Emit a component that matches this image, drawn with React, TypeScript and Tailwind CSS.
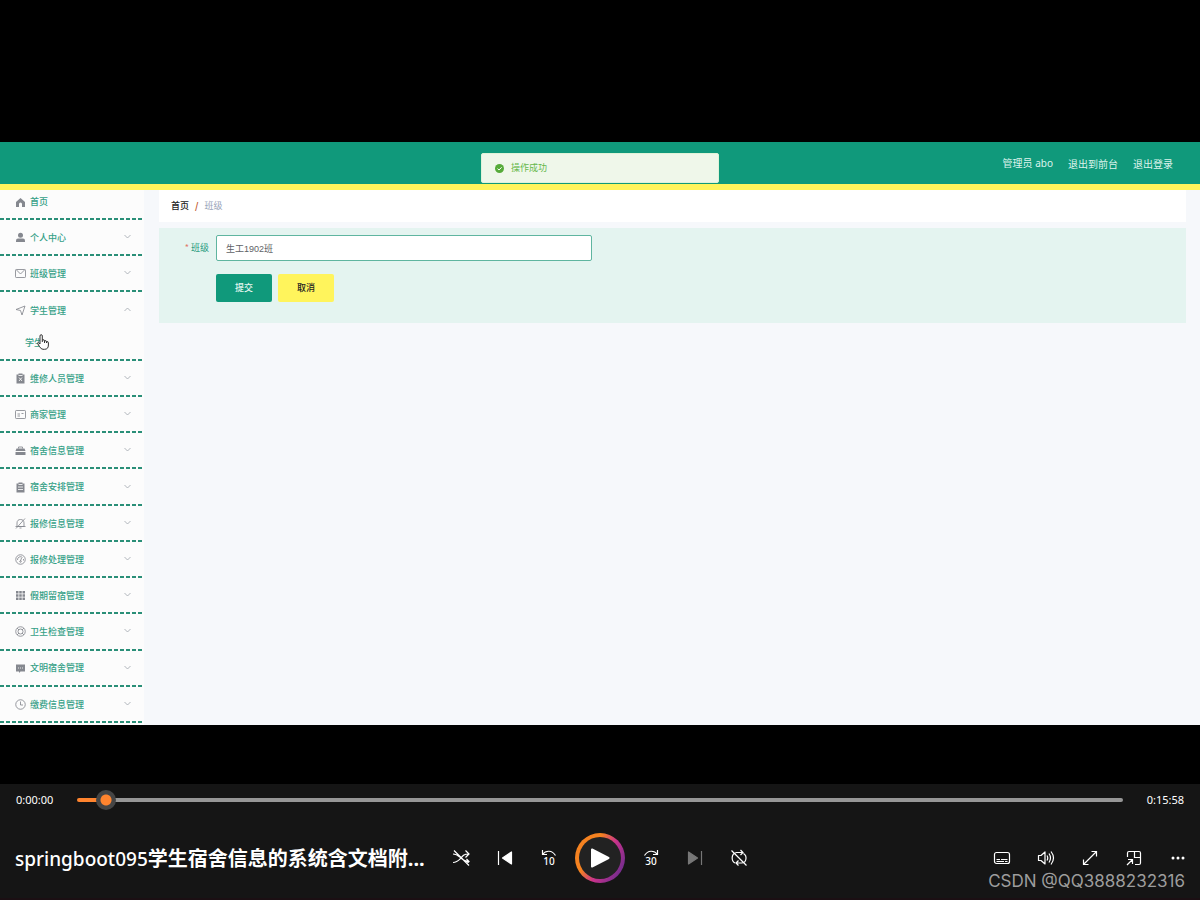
import React, { useState } from "react";

type IconProps = { name: string };

const MENU = [
    { label: "个人中心", icon: "user" },
    { label: "班级管理", icon: "mail" },
    { label: "学生管理", icon: "position", child: "学生" },
    { label: "维修人员管理", icon: "failed" },
    { label: "商家管理", icon: "postcard" },
    { label: "宿舍信息管理", icon: "briefcase" },
    { label: "宿舍安排管理", icon: "order" },
    { label: "报修信息管理", icon: "bell" },
    { label: "报修处理管理", icon: "gauge" },
    { label: "假期留宿管理", icon: "grid" },
    { label: "卫生检查管理", icon: "help" },
    { label: "文明宿舍管理", icon: "chat" },
    { label: "缴费信息管理", icon: "clock" },
];

const MenuIcon = ({ name }: IconProps) => {
    const shapes: Record<string, React.ReactNode> = {
        home: <path fill="currentColor" stroke="none" d="M11 2 L20 10 V20 H14 V14 A3 3 0 0 0 8 14 V20 H2 V10 Z" />,
        user: (
            <g fill="currentColor" stroke="none">
                <circle cx="11" cy="6.5" r="5" />
                <path d="M2 20 V17 A4 4 0 0 1 6 13 H16 A4 4 0 0 1 20 17 V20 Z" />
            </g>
        ),
        mail: (
            <>
                <rect x="1" y="3" width="20" height="16" rx="1.5" />
                <path d="M3 4 L11 12 L19 4" />
            </>
        ),
        position: <path d="M2 9 L20 2 L14 20 L11 11 Z" />,
        failed: (
            <>
                <path fill="currentColor" stroke="none" d="M3 3 H7 V1 H15 V3 H19 V21 H3 Z" />
                <path stroke="#fcfcfc" d="M7 5 H15 M8 9 L14 16 M14 9 L8 16" />
            </>
        ),
        postcard: (
            <>
                <rect x="1" y="3" width="20" height="16" rx="1.5" />
                <path d="M5 10 H10 M5 14 H10 M13 9 H17" />
            </>
        ),
        briefcase: (
            <>
                <path d="M7 7 V4 H15 V7" />
                <path fill="currentColor" stroke="none" d="M1 12 L3 7 H19 L21 12 Z M1 14 H21 V20 H1 Z" />
            </>
        ),
        order: (
            <>
                <path fill="currentColor" stroke="none" d="M3 3 H7 V1 H15 V3 H19 V21 H3 Z" />
                <path stroke="#fcfcfc" d="M7 5 H15 M6 10 H16 M6 15 H16" />
            </>
        ),
        bell: (
            <>
                <path d="M4 17 V10 C4 5 7 3 11 3 C15 3 18 5 18 10 V17 Z M9 20 H13 M1 17 H21" />
                <path d="M20 1 L2 21" />
            </>
        ),
        gauge: (
            <>
                <circle cx="11" cy="11" r="9.5" />
                <path d="M5 12 A6 6 0 0 1 15 7 M17 10 V13 M13 8 L11 14" />
                <circle cx="11" cy="15" r="1.5" />
            </>
        ),
        grid: (
            <path
                fill="currentColor"
                stroke="none"
                d="M2 2h5v5H2z M8.500 2h5v5h-5z M15 2h5v5h-5z M2 8.500h5v5H2z M8.500 8.500h5v5h-5z M15 8.500h5v5h-5z M2 15h5v5H2z M8.500 15h5v5h-5z M15 15h5v5h-5z"
            />
        ),
        help: (
            <>
                <circle cx="11" cy="11" r="9.5" />
                <circle cx="11" cy="11" r="5" />
                <path d="M4 4 L8 8 M18 4 L14 8 M4 18 L8 14 M18 18 L14 14" />
            </>
        ),
        chat: (
            <>
                <path fill="currentColor" stroke="none" d="M2 3 H20 V17 H11 L8 20 V17 H2 Z" />
                <path stroke="#fcfcfc" d="M6 10 H8 M10 10 H12 M14 10 H16" />
            </>
        ),
        clock: (
            <>
                <circle cx="11" cy="11" r="9.5" />
                <path d="M11 5 V12 H16" />
            </>
        ),
    };
    return (
        <svg viewBox="0 0 22 22" className="size-[11px] shrink-0 text-[#85888f]" fill="none" stroke="currentColor" strokeWidth="1.700">
            {shapes[name]}
        </svg>
    );
};

const DashedLine = () => (
    <div className="h-[2px] shrink-0 bg-[repeating-linear-gradient(90deg,#2a8f78_0px,#2a8f78_4px,transparent_4px,transparent_6px)]" />
);

const Sidebar = () => {
    const [open, setOpen] = useState("学生管理");
    return (
        <nav className="w-36 shrink-0 bg-[#fcfcfc] text-[9px] font-medium text-[#35a087]">
            <a href="#home" className="flex h-7 items-center gap-1 pb-1 pl-[15px]">
                <MenuIcon name="home" />
                首页
            </a>
            <DashedLine />
            <ul className="flex h-[503px] flex-col">
                {MENU.map((item) => (
                    <li key={item.label} className={item.child ? "flex grow basis-8 flex-col" : "flex grow basis-0 flex-col"}>
                        <button
                            onClick={() => setOpen(open === item.label ? "" : item.label)}
                            className="flex grow items-center gap-1 pt-px pr-[13px] pl-[15px] text-left"
                        >
                            <MenuIcon name={item.icon} />
                            <span className="grow">{item.label}</span>
                            <svg viewBox="0 0 7 7" className="mb-[2px] size-[7px] text-[#a0a5ac]" fill="none" stroke="currentColor">
                                <path strokeWidth="0.800" d={open === item.label ? "M0.500 5 L3.500 2 L6.500 5" : "M0.500 2 L3.500 5 L6.500 2"} />
                            </svg>
                        </button>
                        {item.child && (
                            <a href="#student" className="relative flex h-[31px] items-center pl-[25px]">
                                {item.child}
                                {/* Hand pointer */}
                                <svg viewBox="0 0 12 16" className="absolute top-[6px] left-[37px] h-4 w-3" fill="#fff" stroke="#333" strokeLinejoin="round">
                                    <path d="M3 10 V2 Q3 .7 4.200 .7 Q5.300 .7 5.300 2 V6 Q7.500 5 7.500 7 Q9.500 6 9.500 7.700 Q11.400 7 11.400 9 V11 Q11.400 15.300 7.500 15.300 H6 Q4 15.300 2.500 12.500 L.6 9.500 Q.5 7.500 3 10 Z M5.300 6 V8 M7.500 7 V9 M9.500 7.700 V9" />
                                </svg>
                            </a>
                        )}
                        <DashedLine />
                    </li>
                ))}
            </ul>
        </nav>
    );
};

const AdminPage = () => (
    <div className="relative bg-[#f6f8fb] font-['Noto_Sans_CJK_SC',sans-serif]">
        <header className="flex h-12 items-center justify-end gap-[15px] border-b-6 border-[#fff45c] bg-[#10997b] pr-[27px] text-[10px] text-[#dcf3ec]">
            <span className="font-['Noto_Sans','Noto_Sans_CJK_SC',sans-serif]">管理员 abo</span>
            <a href="#front">退出到前台</a>
            <a href="#logout">退出登录</a>
        </header>

        {/* Success message */}
        <div
            role="status"
            className="absolute top-[11px] left-1/2 flex h-[30px] w-[238px] -translate-x-1/2 items-center gap-[7px] rounded-xs border border-[#dff3d8] bg-[#eff7ea] pl-[13px] text-[9px] text-[#67b84a]"
        >
            <svg viewBox="0 0 9 9" className="size-[9px]" fill="none">
                <circle cx="4.500" cy="4.500" r="4.500" fill="#56ab3a" />
                <path d="M2.500 4.600 L4 6 L6.600 3.300" stroke="#fff" />
            </svg>
            操作成功
        </div>

        <div className="flex h-[535px]">
            <Sidebar />
            <main className="grow pr-[14px] pl-[15px] text-[9px]">
                <div className="flex h-8 items-center gap-[6px] bg-white pl-3">
                    <a href="#home" className="font-medium text-[#222]">首页</a>
                    <span className="font-bold text-[#c0562a]">/</span>
                    <span className="text-[#98a3b8]">班级</span>
                </div>
                <form className="mt-[6px] h-[95px] bg-[#e4f4f0] pt-[7px]" onSubmit={(e) => e.preventDefault()}>
                    <div className="flex items-center">
                        <label htmlFor="className" className="w-[57px] pr-[7px] text-right text-[#1f9a7d]">
                            <span className="text-[#e07a6a]">*</span> 班级
                        </label>
                        <input
                            id="className"
                            defaultValue="生工1902班"
                            className="h-[26px] w-[376px] rounded-xs border border-[#5fb5a0] bg-white px-[9px] font-['Liberation_Sans','Noto_Sans_CJK_SC',sans-serif] text-[#606266] outline-none"
                        />
                    </div>
                    <div className="mt-[13px] flex gap-[6px] pl-[57px] font-medium">
                        <button type="submit" className="h-7 w-14 rounded-xs bg-[#10997b] text-[#e4f6f0]">提交</button>
                        <button type="button" className="h-7 w-14 rounded-xs bg-[#fff45c] text-[#222]">取消</button>
                    </div>
                </form>
            </main>
        </div>
    </div>
);

const ControlButton = ({ label, disabled, children }: { label: string; disabled?: boolean; children: React.ReactNode }) => (
    <button aria-label={label} disabled={disabled} className="flex h-11 w-11 items-center justify-center text-white disabled:text-[#777]">
        {children}
    </button>
);

const Glyph = ({ children }: { children: React.ReactNode }) => (
    <svg viewBox="0 0 18 18" className="size-[18px]" fill="none" stroke="currentColor" strokeWidth="1.200">
        {children}
    </svg>
);

const SkipLabel = ({ seconds, d }: { seconds: string; d: string }) => (
    <span className="flex flex-col items-center text-[10px] leading-[9px] font-medium">
        <svg viewBox="0 0 16 7" className="h-[7px] w-4" fill="none" stroke="currentColor" strokeWidth="1.200">
            <path d={d} />
        </svg>
        {seconds}
    </span>
);

const PlayerBar = () => (
    <footer className="relative h-[116px] border-b-2 border-[#1b0f13] bg-[#151515] text-white">
        <div className="flex h-8 items-center px-4 text-[11px]">
            <span className="w-[61px]">0:00:00</span>
            <input
                type="range"
                aria-label="播放进度"
                min={0}
                max={1000}
                defaultValue={19}
                className="h-5 grow appearance-none bg-transparent [&::-webkit-slider-runnable-track]:h-1 [&::-webkit-slider-runnable-track]:rounded-full [&::-webkit-slider-runnable-track]:bg-[linear-gradient(90deg,#ff842e_30px,#969696_30px)] [&::-webkit-slider-thumb]:-mt-2 [&::-webkit-slider-thumb]:size-5 [&::-webkit-slider-thumb]:appearance-none [&::-webkit-slider-thumb]:rounded-full [&::-webkit-slider-thumb]:bg-[radial-gradient(circle,#ff842e_5px,#454545_6px)]"
            />
            <span className="w-[61px] text-right">0:15:58</span>
        </div>
        <div className="grid h-[84px] grid-cols-[1fr_auto_1fr] items-center">
            <h1 className="truncate pt-[2px] pl-[15px] text-[20px] leading-7 font-bold">
                <span className="text-[19px] font-medium">springboot095</span>学生宿舍信息的系统含文档附...
            </h1>
            <div className="flex items-center">
                <ControlButton label="随机播放已关闭">
                    <Glyph>
                        <path d="M1 13.500 C5 13.500 7 11 9 9 C11 6.500 12 5 16.500 5 M13.500 1.500 L17 5 L13.500 8.500 M1 5 C4.500 5 6.500 7 9 9 C11.500 11.500 13 12.500 17 12.500 M14.500 10 L17 12.500 L15 14.500 M2 1.500 L17 16.500" />
                    </Glyph>
                </ControlButton>
                <ControlButton label="上一个">
                    <Glyph>
                        <path d="M2.500 2 V16" />
                        <path fill="currentColor" strokeLinejoin="round" d="M15.500 3 V15 L6.500 9 Z" />
                    </Glyph>
                </ControlButton>
                <ControlButton label="后退 10 秒">
                    <SkipLabel seconds="10" d="M1.500 0 V4.500 H6 M1.500 4.500 C5 0 11 0 14.500 5.500" />
                </ControlButton>
                <button
                    aria-label="播放"
                    className="mx-1 flex size-[50px] items-center justify-center rounded-full bg-[linear-gradient(120deg,#f58220_35%,#c8328c_58%,#7b2d8e_85%)]"
                >
                    <span className="flex size-[42px] items-center justify-center rounded-full bg-[#222]">
                        <svg viewBox="0 0 20 20" className="size-5" fill="#fff" stroke="#fff" strokeWidth="2" strokeLinejoin="round">
                            <path d="M2 1.500 L18.500 10 L2 18.500 Z" />
                        </svg>
                    </span>
                </button>
                <ControlButton label="前进 30 秒">
                    <SkipLabel seconds="30" d="M14.500 0 V4.500 H10 M14.500 4.500 C11 0 5 0 1.500 5.500" />
                </ControlButton>
                <ControlButton label="下一个" disabled>
                    <Glyph>
                        <path d="M15.500 2 V16" />
                        <path fill="currentColor" strokeLinejoin="round" d="M2.500 3 V15 L11.500 9 Z" />
                    </Glyph>
                </ControlButton>
                <ControlButton label="循环已关闭">
                    <Glyph>
                        <path d="M5 14 C1 12 1 4.500 6.500 3.500 H13 M10.500 1 L13 3.500 L10.500 6 M13.500 4.500 C17.500 7 16.500 13.500 12 14 H6 M8.500 11.500 L6 14 L8.500 16.500 M1.500 1.500 L16.500 16.500" />
                    </Glyph>
                </ControlButton>
            </div>
            <div className="flex justify-end">
                <ControlButton label="字幕">
                    <Glyph>
                        <rect x="1.500" y="3.500" width="15" height="11" rx="2" />
                        <path strokeWidth="1" d="M3.500 10.500 H7 M8 10.500 H14.500 M3.500 12.500 H11 M12 12.500 H14.500" />
                    </Glyph>
                </ControlButton>
                <ControlButton label="音量">
                    <Glyph>
                        <path strokeLinejoin="round" d="M1.500 6.500 H4 L8 3 V15 L4 11.500 H1.500 Z" />
                        <path d="M10 6.500 Q11.500 9 10 11.500 M12 4.500 Q15 9 12 13.500 M14 2.500 Q19 9 14 15.500" />
                    </Glyph>
                </ControlButton>
                <ControlButton label="全屏">
                    <Glyph>
                        <path d="M2.500 15.500 L15.500 2.500 M10.500 2.500 H15.500 V7.500 M2.500 10.500 V15.500 H7.500" />
                    </Glyph>
                </ControlButton>
                <ControlButton label="迷你播放器">
                    <Glyph>
                        <path d="M2.500 8 V4 Q2.500 2.500 4 2.500 H14 Q15.500 2.500 15.500 4 V14 Q15.500 15.500 14 15.500 H10 M9.500 2.500 V8.500 H15.500 M2 16 L7.500 10.500 M3 10.500 H7.500 V15" />
                    </Glyph>
                </ControlButton>
                <ControlButton label="更多">
                    <Glyph>
                        <g fill="currentColor" stroke="none">
                            <circle cx="4" cy="9" r="1.500" />
                            <circle cx="9" cy="9" r="1.500" />
                            <circle cx="14" cy="9" r="1.500" />
                        </g>
                    </Glyph>
                </ControlButton>
            </div>
        </div>
        <span className="pointer-events-none absolute right-[15px] bottom-[7px] font-['Inter',sans-serif] text-[17px] leading-5 text-[#9d9d9d]">
            CSDN @QQ3888232316
        </span>
    </footer>
);

const App = () => (
    <div className="flex min-h-screen flex-col justify-between bg-black font-['Noto_Sans','Noto_Sans_CJK_SC',sans-serif]">
        <div className="pt-[142px]">
            <AdminPage />
        </div>
        <PlayerBar />
    </div>
);

export default App;
